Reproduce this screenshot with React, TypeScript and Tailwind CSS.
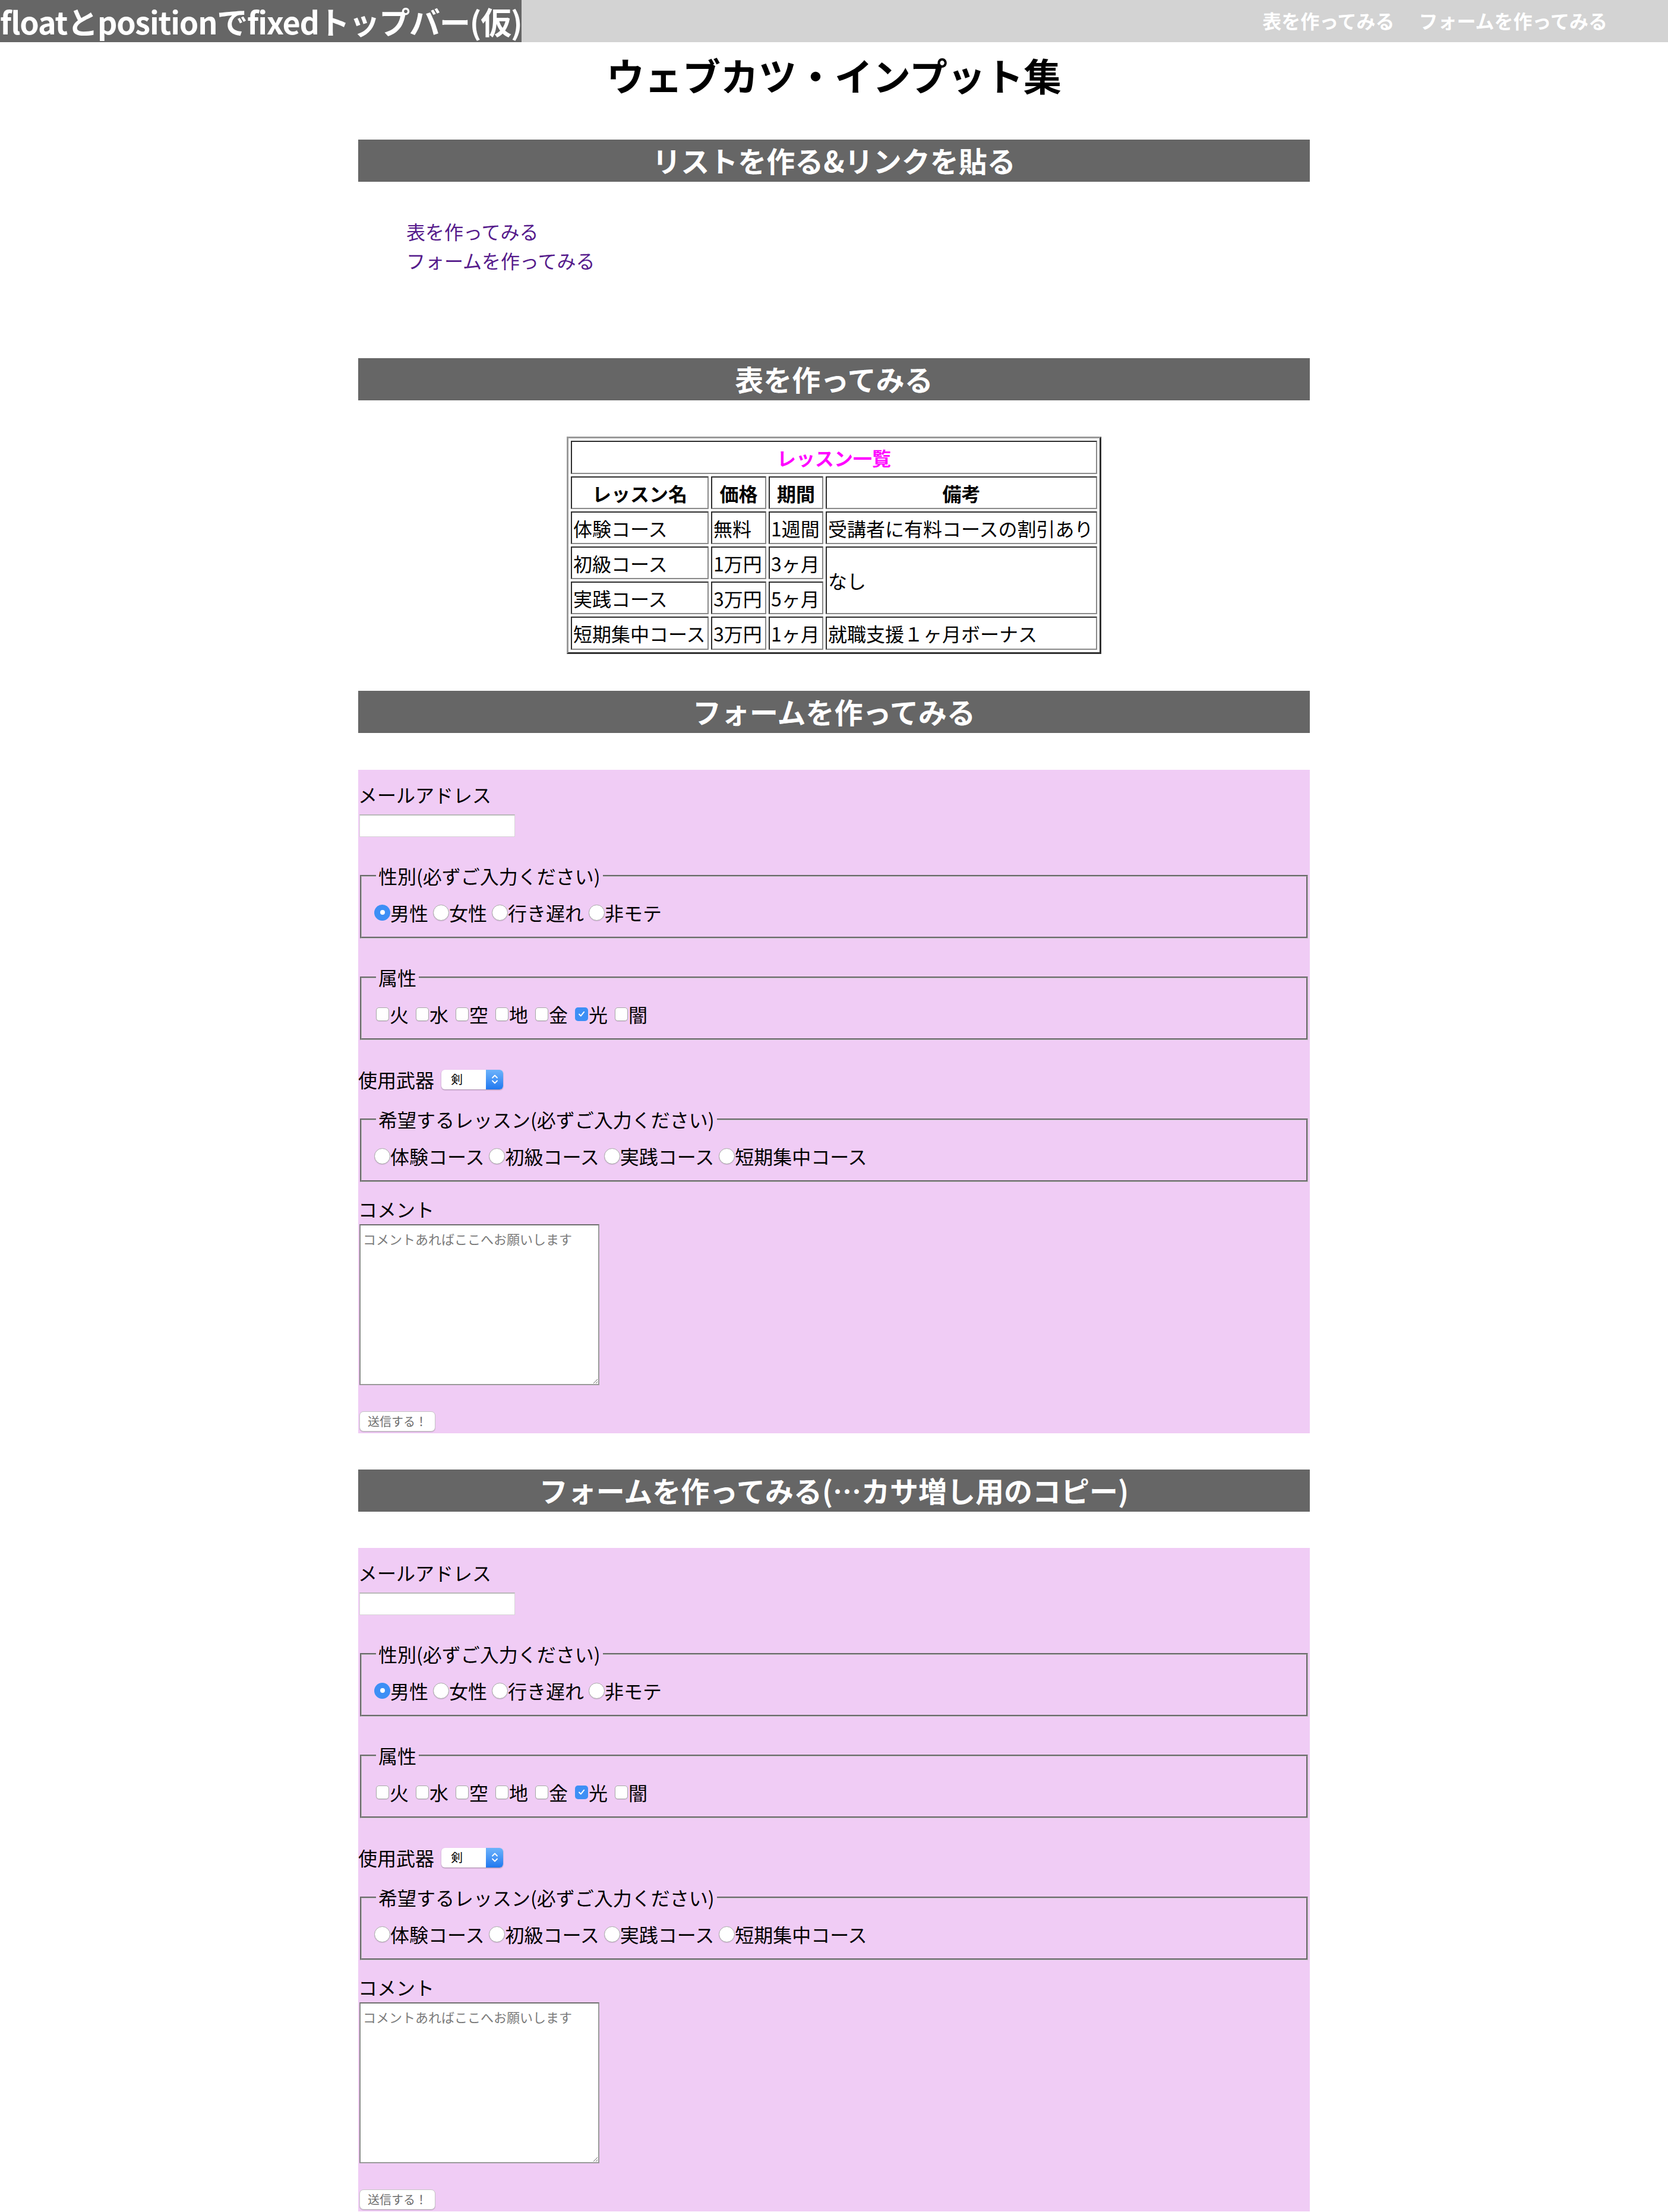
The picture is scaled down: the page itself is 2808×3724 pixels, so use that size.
import React from "react";

const Radio = ({ checked = false }: { checked?: boolean }) => {
  if (checked) {
    return (
      <span className="flex h-[27px] w-[27px] shrink-0 items-center justify-center rounded-full bg-[#3d8ff5]">
        <span className="h-[8px] w-[8px] rounded-full bg-white" />
      </span>
    );
  }
  return (
    <span className="block h-[27px] w-[27px] shrink-0 rounded-full border border-[#a8a8a8] bg-white shadow-[0_1px_1px_rgba(0,0,0,0.12)]" />
  );
};

const Check = ({ checked = false }: { checked?: boolean }) => {
  if (checked) {
    return (
      <span className="flex h-[23px] w-[22px] shrink-0 items-center justify-center rounded-[5px] bg-[#3d8ff5]">
        <svg viewBox="0 0 12 12" className="h-[14px] w-[14px]">
          <path
            d="M2.6 6.4 5 8.9 9.6 3.2"
            fill="none"
            stroke="white"
            strokeWidth="1.7"
            strokeLinecap="round"
            strokeLinejoin="round"
          />
        </svg>
      </span>
    );
  }
  return (
    <span className="block h-[23px] w-[22px] shrink-0 rounded-[5px] border border-[#a8a8a8] bg-white shadow-[0_1px_1px_rgba(0,0,0,0.1)]" />
  );
};

const RadioRow = ({ items, checkedIndex }: { items: string[]; checkedIndex?: number }) => (
  <div className="flex h-[40px] items-center">
    {items.map((item, i) => (
      <label key={item} className="mr-[8px] flex items-center">
        <Radio checked={i === checkedIndex} />
        <span>{item}</span>
      </label>
    ))}
  </div>
);

const CheckRow = ({ items, checkedIndex }: { items: string[]; checkedIndex?: number }) => (
  <div className="ml-[3px] flex h-[40px] items-center">
    {items.map((item, i) => (
      <label key={item} className="mr-[12px] flex items-center">
        <span className="mr-[1px] block">
          <Check checked={i === checkedIndex} />
        </span>
        <span>{item}</span>
      </label>
    ))}
  </div>
);

const Group = ({ legend, children }: { legend: string; children: React.ReactNode }) => (
  <fieldset className="mx-[3px] border-[3px] border-[#bdbdbd] [border-style:groove] pb-[21px] pl-[21px] pr-[21px] pt-[18px]">
    <legend className="ml-[3px] px-[4px] leading-[48px]">{legend}</legend>
    {children}
  </fieldset>
);

const SectionBar = ({ title }: { title: string }) => (
  <h2 className="flex h-[71px] items-center justify-center bg-[#666666] pb-[4px] text-[48px] font-bold leading-none text-white">
    {title}
  </h2>
);

const LessonForm = () => (
  <form className="bg-[#f0ccf5] pb-[3px] pt-[17px]">
    <p className="leading-[48px]">メールアドレス</p>
    <input
      type="email"
      className="ml-[2px] mt-[10px] block h-[38px] w-[262px] border border-[#d6d6d6] border-t-2 border-t-[#b9b9b9] bg-white"
    />

    <div className="mt-[41px]">
      <Group legend="性別(必ずご入力ください)">
        <RadioRow items={["男性", "女性", "行き遅れ", "非モテ"]} checkedIndex={0} />
      </Group>
    </div>

    <div className="mt-[41px]">
      <Group legend="属性">
        <CheckRow items={["火", "水", "空", "地", "金", "光", "闇"]} checkedIndex={5} />
      </Group>
    </div>

    <div className="mt-[42px] flex h-[48px] items-center">
      <span>使用武器</span>
      <div className="ml-[12px] flex h-[33px] w-[104px] items-center justify-between rounded-[6px] bg-white shadow-[0_1px_2px_rgba(0,0,0,0.35)]">
        <span className="pl-[16px] text-[20px] leading-none">剣</span>
        <span className="flex h-full w-[29px] items-center justify-center rounded-r-[6px] bg-linear-to-b from-[#6cb3fb] to-[#1f78ef]">
          <svg viewBox="0 0 14 24" className="h-[24px] w-[14px]">
            <path
              d="M3 9.5 7 5.5l4 4M3 14.5l4 4 4-4"
              fill="none"
              stroke="white"
              strokeWidth="1.8"
              strokeLinecap="round"
              strokeLinejoin="round"
            />
          </svg>
        </span>
      </div>
    </div>

    <div className="mt-[19px]">
      <Group legend="希望するレッスン(必ずご入力ください)">
        <RadioRow items={["体験コース", "初級コース", "実践コース", "短期集中コース"]} />
      </Group>
    </div>

    <p className="mt-[21px] leading-[48px]">コメント</p>
    <textarea
      placeholder="コメントあればここへお願いします"
      className="ml-[2px] mt-[2px] block h-[271px] w-[404px] border-2 border-[#9a9a9a] border-l-[#8a8a8a] border-t-[#6f6f6f] bg-white px-[4px] py-[8px] text-[22px] leading-[28px] placeholder:text-[#7b7b7b]"
    />

    <button
      type="button"
      className="ml-[2px] mt-[44px] block h-[34px] w-[128px] rounded-[7px] border border-[#c6c6c6] bg-white text-center text-[20px] leading-[32px] text-[#6e6e6e] shadow-[0_1px_1px_rgba(0,0,0,0.18)]"
    >
      送信する！
    </button>
  </form>
);

const cell =
  "whitespace-nowrap border-2 border-b-[#8a8a8a] border-l-[#2e2e2e] border-r-[#8a8a8a] border-t-[#2e2e2e] px-[2px]";

const App = () => {
  return (
    <div className="min-h-screen bg-white font-['Noto_Sans_CJK_JP','Noto_Sans',sans-serif] text-[32px] text-black">
      <header className="flex h-[71px] items-center justify-between bg-[#d3d3d3]">
        <div className="flex h-full items-center whitespace-nowrap bg-[#666666] text-[52px] font-bold leading-none tracking-[-1.2px] text-white">
          floatとpositionでfixedトップバー(仮)
        </div>
        <nav className="flex gap-[41px] pb-[3px] pr-[102px] text-[32px] font-bold leading-none text-white">
          <a href="#table">表を作ってみる</a>
          <a href="#form">フォームを作ってみる</a>
        </nav>
      </header>

      <main className="mx-auto w-[1602px]">
        <h1 className="mt-[14px] text-center text-[64px] font-bold leading-[80px]">
          ウェブカツ・インプット集
        </h1>

        <section className="mt-[70px]">
          <SectionBar title="リストを作る&リンクを貼る" />
          <ul className="mt-[59px] pl-[81px] leading-[49px] text-[#551a8b]">
            <li>
              <a href="#table">表を作ってみる</a>
            </li>
            <li>
              <a href="#form">フォームを作ってみる</a>
            </li>
          </ul>
        </section>

        <section id="table" className="mt-[140px]">
          <SectionBar title="表を作ってみる" />
          <table className="mx-auto mt-[61px] w-[900px] table-fixed border-separate border-spacing-[4px] border-[3px] border-b-[#303030] border-l-[#9a9a9a] border-r-[#303030] border-t-[#9a9a9a] leading-none">
            <colgroup>
              <col className="w-[232px]" />
              <col className="w-[93px]" />
              <col className="w-[92px]" />
              <col className="w-[457px]" />
            </colgroup>
            <tbody>
              <tr className="h-[56px]">
                <th colSpan={4} className={`${cell} text-center font-bold text-[#ff00ff]`}>
                  レッスン一覧
                </th>
              </tr>
              <tr className="h-[55px]">
                {["レッスン名", "価格", "期間", "備考"].map((h) => (
                  <th key={h} className={`${cell} text-center font-bold`}>
                    {h}
                  </th>
                ))}
              </tr>
              <tr className="h-[55px]">
                {["体験コース", "無料", "1週間", "受講者に有料コースの割引あり"].map((c) => (
                  <td key={c} className={cell}>
                    {c}
                  </td>
                ))}
              </tr>
              <tr className="h-[55px]">
                {["初級コース", "1万円", "3ヶ月"].map((c) => (
                  <td key={c} className={cell}>
                    {c}
                  </td>
                ))}
                <td rowSpan={2} className={cell}>
                  なし
                </td>
              </tr>
              <tr className="h-[55px]">
                {["実践コース", "3万円", "5ヶ月"].map((c) => (
                  <td key={c} className={cell}>
                    {c}
                  </td>
                ))}
              </tr>
              <tr className="h-[56px]">
                {["短期集中コース", "3万円", "1ヶ月", "就職支援１ヶ月ボーナス"].map((c, i) => (
                  <td key={`${c}_${i}`} className={cell}>
                    {c}
                  </td>
                ))}
              </tr>
            </tbody>
          </table>
        </section>

        <section id="form" className="mt-[62px]">
          <SectionBar title="フォームを作ってみる" />
          <div className="mt-[62px]">
            <LessonForm />
          </div>
        </section>

        <section className="mt-[61px]">
          <SectionBar title="フォームを作ってみる(…カサ増し用のコピー)" />
          <div className="mt-[61px]">
            <LessonForm />
          </div>
        </section>
      </main>
    </div>
  );
};

export default App;
